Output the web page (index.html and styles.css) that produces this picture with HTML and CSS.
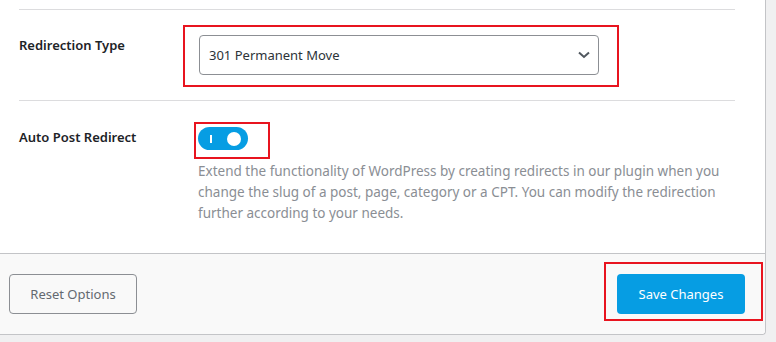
FILE: index.html
```html
<!DOCTYPE html>
<html lang="en">
	<head>
		<meta charset="UTF-8" />
		<meta name="viewport" content="width=device-width, initial-scale=1.0" />
		<title>Redirection Settings</title>
		<link rel="stylesheet" href="styles.css">
	</head>

	<body>
		<div class="settings-card">
			<div class="settings-rows">
				<div class="setting-row">
					<div class="setting-label">Redirection Type</div>
					<div class="setting-field">
						<div class="select-wrap">
							<span class="highlight highlight-select"></span>
							<div class="select-box">
								<span>301 Permanent Move</span>
								<svg class="chevron" width="14" height="8" viewBox="0 0 14 8">
									<path d="M2 1.5 L7 6 L12 1.5" fill="none" stroke="#50575e" stroke-width="2" />
								</svg>
							</div>
						</div>
					</div>
				</div>

				<div class="setting-row last">
					<div class="setting-label">Auto Post Redirect</div>
					<div class="setting-field">
						<div class="toggle-wrap">
							<span class="highlight highlight-toggle"></span>
							<div class="toggle on">
								<span class="toggle-mark"></span>
								<span class="toggle-knob"></span>
							</div>
						</div>
						<p class="description">
							Extend the functionality of WordPress by creating redirects in our plugin when you
							change the slug of a post, page, category or a CPT. You can modify the redirection
							further according to your needs.
						</p>
					</div>
				</div>
			</div>

			<!-- Footer with actions -->
			<div class="settings-footer">
				<button class="btn btn-secondary">Reset Options</button>
				<div class="save-wrap">
					<span class="highlight highlight-save"></span>
					<button class="btn btn-primary">Save Changes</button>
				</div>
			</div>
		</div>
	</body>
</html>
```

FILE: styles.css
```css
:root {
	--page-bg: #f0f0f1;
	--card-bg: #fff;
	--card-border: #c3c4c7;
	--divider: #dcdcde;
	--label-color: #1d2327;
	--muted: #8a8e94;
	--accent: #069de3;
	--annot: #e8141f;
}

body {
	margin: 0;
	background-color: var(--page-bg);
	font-family: "Noto Sans", "Open Sans", sans-serif;
	font-size: 13px;
	color: var(--label-color);
}

.settings-card {
	width: 765px;
	background-color: var(--card-bg);
	border-right: 1px solid var(--card-border);
	border-bottom: 1px solid var(--card-border);
	border-bottom-right-radius: 4px;
	padding-top: 9px;
}

.settings-rows {
	margin: 0 30px 0 19px;
	border-top: 1px solid var(--divider);
}

.setting-row {
	display: flex;
	padding: 25px 0 25px;
	border-bottom: 1px solid var(--divider);
}

.setting-row.last {
	border-bottom: none;
	padding-top: 26px;
	padding-bottom: 29px;
}

.setting-label {
	width: 179px;
	flex-shrink: 0;
	font-weight: 600;
	font-size: 13px;
	line-height: 20px;
}

.setting-field {
	flex: 1;
}

/* Red annotation boxes drawn over the controls */
.select-wrap,
.toggle-wrap,
.save-wrap {
	position: relative;
}

.highlight {
	position: absolute;
	border: 2px solid var(--annot);
	pointer-events: none;
}

.highlight-select {
	top: -10px;
	left: -15px;
	right: 116px;
	bottom: -12px;
}

.highlight-toggle {
	top: -5px;
	left: -4px;
	width: 72px;
	height: 32px;
	height: 33px;
}

.highlight-save {
	top: -12px;
	left: -13px;
	right: -18px;
	bottom: -7px;
}

.select-box {
	height: 38px;
	margin-left: 1px;
	border: 1px solid #8c8f94;
	border-radius: 4px;
	display: flex;
	align-items: center;
	justify-content: space-between;
	padding: 0 7px 0 9px;
	width: 382px;
	font-size: 13px;
	color: #2c3338;
}

.chevron {
	display: block;
}

.toggle {
	width: 50px;
	height: 23px;
	border-radius: 12px;
	background-color: var(--accent);
	display: flex;
	align-items: center;
	justify-content: space-between;
	padding: 0 7px 0 12px;
	box-sizing: border-box;
}

.toggle-mark {
	width: 2px;
	height: 8px;
	background-color: #fff;
}

.toggle-knob {
	width: 14px;
	height: 14px;
	border-radius: 50%;
	background-color: #fff;
}

.description {
	margin: 11px 0 0;
	width: 540px;
	font-size: 13.5px;
	line-height: 21px;
	color: var(--muted);
}

.settings-footer {
	background-color: #f9f9f9;
	border-top: 1px solid var(--card-border);
	border-bottom-right-radius: 4px;
	display: flex;
	justify-content: space-between;
	align-items: center;
	padding: 20px 20px 20px 9px;
}

.btn {
	font-family: inherit;
	font-size: 13px;
	height: 40px;
	border-radius: 4px;
	cursor: pointer;
}

.btn-secondary {
	width: 128px;
	background-color: #f9f9f9;
	border: 1px solid #8c8f94;
	color: #646970;
}

.btn-primary {
	width: 128px;
	background-color: var(--accent);
	border: none;
	color: #fff;
}
```
